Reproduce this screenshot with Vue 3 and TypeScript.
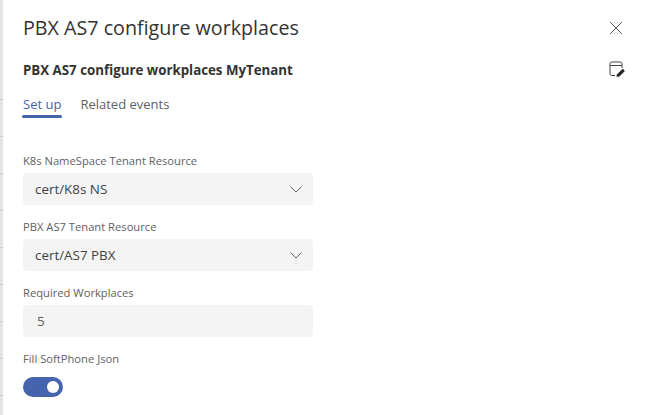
<template>
  <div class="page">
    <div class="backdrop">
      <div v-for="n in 9" :key="n" class="backdrop-row" />
    </div>
    <div class="panel">
      <header class="title-row">
        <h1>PBX AS7 configure workplaces</h1>
        <button class="icon-btn" aria-label="Close">
          <svg width="16" height="16" viewBox="0 0 16 16">
            <path d="M2 2l12 12M14 2L2 14" stroke="#555" stroke-width="1" fill="none" />
          </svg>
        </button>
      </header>
      <div class="sub-row">
        <h2>PBX AS7 configure workplaces MyTenant</h2>
        <svg class="edit-icon" width="18" height="18" viewBox="0 0 18 18" fill="none">
          <path d="M7 15.5H3.8A1.8 1.8 0 0 1 2 13.7V3.8A1.8 1.8 0 0 1 3.8 2h8.4A1.8 1.8 0 0 1 14 3.8V8" stroke="#444" stroke-width="1" />
          <path d="M2 5.5h12" stroke="#444" stroke-width="1" />
          <path d="M8.5 17l.6-2.8 5.6-5.4 2.2 2.2-5.6 5.4z" fill="#252525" />
        </svg>
      </div>
      <nav class="tabs">
        <span class="tab active">Set up</span>
        <span class="tab">Related events</span>
      </nav>
      <form class="form">
        <div v-for="f in fields" :key="f.label" class="field">
          <label>{{ f.label }}</label>
          <div class="input" :class="{ plain: !f.select }">
            <span>{{ f.value }}</span>
            <svg v-if="f.select" width="12" height="7" viewBox="0 0 12 7" fill="none">
              <path d="M.5.5L6 6l5.5-5.5" stroke="#616161" stroke-width="1" />
            </svg>
          </div>
        </div>
        <div class="field">
          <label>Fill SoftPhone Json</label>
          <div class="toggle"><i /></div>
        </div>
      </form>
    </div>
  </div>
</template>

<script setup lang="ts">
const fields = [
  { label: 'K8s NameSpace Tenant Resource', value: 'cert/K8s NS', select: true },
  { label: 'PBX AS7 Tenant Resource', value: 'cert/AS7 PBX', select: true },
  { label: 'Required Workplaces', value: '5', select: false },
]
</script>

<style>
html, body { margin: 0; background: #fff; overflow: hidden; }
</style>

<style scoped>
.page {
  display: flex;
  width: 646px;
  height: 415px;
  overflow: hidden;
  font-family: "Open Sans", "Noto Sans", sans-serif;
  color: #252423;
}
.backdrop {
  width: 3px;
  flex: none;
  background: #e4e4e4;
  padding-top: 63px;
}
.backdrop-row {
  height: 37px;
  box-sizing: border-box;
  border-bottom: 1px solid #cbcbcb;
}
.panel {
  flex: 1;
  min-width: 0;
  padding: 0 20px;
}
.title-row {
  display: flex;
  justify-content: space-between;
  align-items: center;
  height: 55px;
  padding-right: 2px;
}
h1 {
  margin: 0;
  font-size: 19.7px;
  font-weight: 400;
  color: #333;
}
.icon-btn {
  border: 0;
  background: none;
  padding: 0;
  display: flex;
}
.sub-row {
  display: flex;
  justify-content: space-between;
  align-items: center;
  height: 30px;
}
h2 {
  margin: 0;
  font-size: 13.3px;
  font-weight: 700;
  color: #333;
}
.edit-icon {
  margin-bottom: 2px;
}
.tabs {
  display: flex;
  gap: 17px;
  margin: 4px 0 0 -1px;
  font-size: 13px;
  line-height: 18px;
  color: #616161;
}
.tab {
  padding: 6px 1px 0;
}
.tab::after {
  content: "";
  display: block;
  height: 3px;
  margin: 2px -1px 0;
  border-radius: 2px;
}
.tab.active {
  color: #4a62aa;
}
.tab.active::after {
  background: #4564ad;
}
.form {
  display: flex;
  flex-direction: column;
  gap: 13px;
  width: 290px;
  margin-top: 34px;
}
.field label {
  display: block;
  font-size: 11.2px;
  line-height: 18px;
  color: #616161;
  margin-bottom: 3px;
}
.input {
  display: flex;
  align-items: center;
  justify-content: space-between;
  height: 32px;
  padding: 0 11px 0 12px;
  background: #f4f4f4;
  border-radius: 4px;
  font-size: 13.4px;
  color: #424242;
}
.input.plain {
  padding-left: 14px;
  color: #616161;
}
.toggle {
  position: relative;
  width: 40px;
  height: 20px;
  margin-top: 9px;
  border-radius: 10px;
  background: #4564ad;
}
.toggle i {
  position: absolute;
  top: 4px;
  right: 4px;
  width: 12px;
  height: 12px;
  border-radius: 50%;
  background: #fff;
}
</style>
